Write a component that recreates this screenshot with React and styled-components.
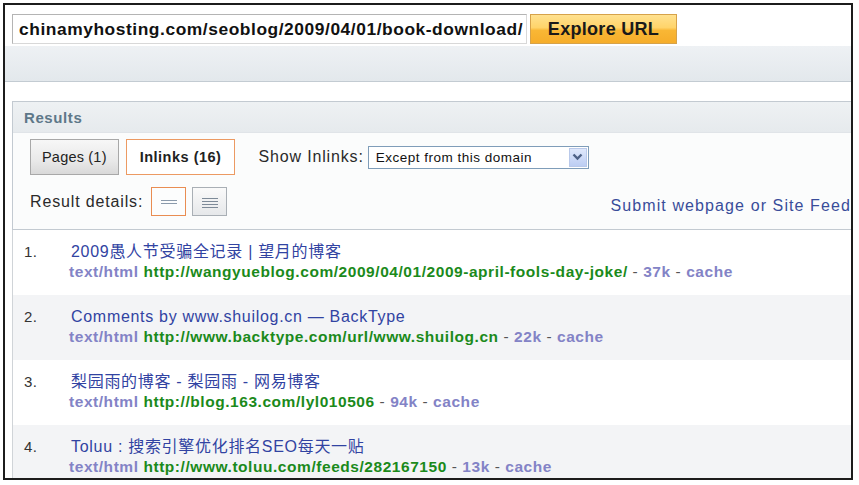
import React from "react";
import styled, { createGlobalStyle } from "styled-components";

const Global = createGlobalStyle`
  html, body { margin: 0; padding: 0; background: #fff; }
  body { font-family: "Liberation Sans", Arial, "Noto Sans CJK SC", sans-serif; }
  * { box-sizing: border-box; }
`;

const Frame = styled.div`
  margin: 3px 6px 0 3px;
  height: 477px;
  border: 2px solid #1c1c1c;
  background: #fff;
  overflow: hidden;
  display: flex;
  flex-direction: column;
  & > * { flex-shrink: 0; }
`;

const TopBar = styled.div`
  display: flex;
  align-items: stretch;
  gap: 3px;
  padding: 9px 7px 0 7px;
  height: 39px;
`;

const UrlInput = styled.div`
  width: 515px;
  border: 1px solid #b4b4b4;
  border-right-color: #d8d8d8;
  border-bottom-color: #d8d8d8;
  background: #fff;
  font-weight: bold;
  font-size: 17.4px;
  letter-spacing: 0.55px;
  color: #111;
  display: flex;
  align-items: center;
  padding-left: 6px;
  white-space: nowrap;
  overflow: hidden;
`;

const ExploreButton = styled.div`
  width: 147px;
  border: 1px solid #d6a24a;
  background: linear-gradient(#ffe18f 0%, #ffd46a 45%, #f9b735 55%, #f6ad2a 100%);
  font-weight: bold;
  font-size: 18px;
  color: #1a1a1a;
  display: flex;
  align-items: center;
  justify-content: center;
  letter-spacing: 0.3px;
`;

const Band = styled.div`
  margin-top: 2px;
  height: 36px;
  background: linear-gradient(#eef1f4, #e3e8ec);
  border-bottom: 1px solid #c3cbd2;
`;

const Gap = styled.div`
  height: 19px;
`;

const Panel = styled.div`
  margin-left: 7px;
  border: 1px solid #c3cad1;
  border-right: none;
  background: #fbfcfc;
`;

const PanelHeader = styled.div`
  height: 31px;
  background: linear-gradient(#eef1f3, #e6eaed);
  border-bottom: 1px solid #e0e4e8;
  display: flex;
  align-items: center;
  padding-left: 11px;
  font-weight: bold;
  font-size: 15px;
  letter-spacing: 0.6px;
  color: #5e7889;
`;

const PanelBody = styled.div`
  padding: 6px 0 13px 17px;
  display: flex;
  flex-direction: column;
  gap: 12px;
`;

const Row = styled.div`
  display: flex;
  align-items: center;
`;

const Tab = styled.div`
  height: 36px;
  padding: 0 ${(p) => (p.$active ? "13px" : "11px")};
  margin-right: 7px;
  display: flex;
  align-items: center;
  font-size: 14.5px;
  font-weight: ${(p) => (p.$active ? "bold" : "normal")};
  color: #222;
  border: 1px solid ${(p) => (p.$active ? "#ec9a62" : "#a8a8a8")};
  background: ${(p) =>
    p.$active ? "#fff" : "linear-gradient(#f7f7f7, #e9e9e9 60%, #d9d9d9)"};
  letter-spacing: ${(p) => (p.$active ? "0.5px" : "0.2px")};
`;

const Label = styled.span`
  font-size: 16px;
  color: #2a2a2a;
  letter-spacing: 0.85px;
  margin-left: ${(p) => p.$ml || 0}px;
  margin-right: ${(p) => p.$mr || 0}px;
`;

const Select = styled.div`
  width: 221px;
  height: 23px;
  border: 1px solid #7f9db9;
  background: #fff;
  display: flex;
  align-items: center;
  justify-content: space-between;
  padding: 0 1px 0 7px;
  font-size: 13.5px;
  color: #111;
  letter-spacing: 0.5px;
`;

const SelectArrow = styled.div`
  width: 18px;
  height: 19px;
  background: linear-gradient(#dfe8fb, #bccdf3);
  border: 1px solid #b9c9ea;
  display: flex;
  align-items: center;
  justify-content: center;
`;

const DetailRow = styled.div`
  display: flex;
  align-items: center;
  height: 29px;
`;

const IconButton = styled.div`
  width: 35px;
  height: 29px;
  margin-right: 6px;
  border: 1px solid ${(p) => (p.$active ? "#e98d52" : "#a9afb5")};
  background: ${(p) => (p.$active ? "#fcfdfd" : "linear-gradient(#fafafa, #e6e8ea)")};
  display: flex;
  align-items: center;
  justify-content: center;
`;

const SubmitLink = styled.a`
  margin-left: auto;
  margin-right: 0;
  margin-top: 8px;
  font-size: 16px;
  color: #394d9a;
  letter-spacing: 1.1px;
  text-decoration: none;
  white-space: nowrap;
`;

const List = styled.div`
  margin-left: 7px;
  border-left: 1px solid #d0d4d8;
`;

const Item = styled.div`
  height: 65px;
  padding: 11px 0 0 11px;
  background: ${(p) => (p.$alt ? "#f3f4f6" : "#fff")};
  display: grid;
  grid-template-columns: 47px 1fr;
  grid-template-rows: 21px 20px;
  align-items: start;
`;

const Num = styled.span`
  font-size: 15px;
  line-height: 21px;
  color: #333;
  letter-spacing: 0.5px;
`;

const Title = styled.a`
  font-size: 16px;
  line-height: 21px;
  color: #3143a2;
  text-decoration: none;
  letter-spacing: 0.7px;
  white-space: nowrap;
`;

const Meta = styled.div`
  grid-column: 2;
  margin-left: -2px;
  font-size: 15.5px;
  line-height: 20px;
  font-weight: bold;
  white-space: nowrap;
  color: #555;
  letter-spacing: 0.55px;
`;

const Lav = styled.span`
  color: #8383c6;
`;

const Green = styled.span`
  color: #1b8a1b;
`;

const Dash = styled.span`
  color: #555;
  font-weight: normal;
`;

const items = [
  {
    title: "2009愚人节受骗全记录 | 望月的博客",
    url: "http://wangyueblog.com/2009/04/01/2009-april-fools-day-joke/",
    size: "37k",
  },
  {
    title: "Comments by www.shuilog.cn — BackType",
    url: "http://www.backtype.com/url/www.shuilog.cn",
    size: "22k",
  },
  {
    title: "梨园雨的博客 - 梨园雨 - 网易博客",
    url: "http://blog.163.com/lyl010506",
    size: "94k",
  },
  {
    title: "Toluu : 搜索引擎优化排名SEO每天一贴",
    url: "http://www.toluu.com/feeds/282167150",
    size: "13k",
  },
];

const Chevron = () => (
  <svg width="11" height="8" viewBox="0 0 11 8">
    <path d="M1.5 1.5 L5.5 5.5 L9.5 1.5" fill="none" stroke="#4d6185" strokeWidth="2.4" />
  </svg>
);

const Lines = ({ count }) => (
  <svg width="18" height="12" viewBox="0 0 18 12">
    {count === 2 ? (
      <>
        <rect x="1" y="4" width="16" height="1" fill="#8a9aab" />
        <rect x="1" y="7" width="16" height="1" fill="#8a9aab" />
      </>
    ) : (
      <>
        <rect x="1" y="2" width="16" height="1" fill="#7d8a98" />
        <rect x="1" y="5" width="16" height="1" fill="#7d8a98" />
        <rect x="1" y="8" width="16" height="1" fill="#7d8a98" />
        <rect x="1" y="11" width="16" height="1" fill="#7d8a98" />
      </>
    )}
  </svg>
);

export default function App() {
  return (
    <>
      <Global />
      <Frame>
        <TopBar>
          <UrlInput>chinamyhosting.com/seoblog/2009/04/01/book-download/</UrlInput>
          <ExploreButton>Explore URL</ExploreButton>
        </TopBar>
        <Band />
        <Gap />
        <Panel>
          <PanelHeader>Results</PanelHeader>
          <PanelBody>
            <Row>
              <Tab>Pages (1)</Tab>
              <Tab $active>Inlinks (16)</Tab>
              <Label $ml={16} $mr={4}>Show Inlinks:</Label>
              <Select>
                <span>Except from this domain</span>
                <SelectArrow>
                  <Chevron />
                </SelectArrow>
              </Select>
            </Row>
            <DetailRow>
              <Label $mr={8}>Result details:</Label>
              <IconButton $active>
                <Lines count={2} />
              </IconButton>
              <IconButton>
                <Lines count={4} />
              </IconButton>
              <SubmitLink>Submit webpage or Site Feed</SubmitLink>
            </DetailRow>
          </PanelBody>
        </Panel>
        <List>
          {items.map((it, i) => (
            <Item key={i} $alt={i % 2 === 1}>
              <Num>{i + 1}.</Num>
              <Title>{it.title}</Title>
              <Meta>
                <Lav>text/html</Lav> <Green>{it.url}</Green>
                <Dash> - </Dash>
                <Lav>{it.size}</Lav>
                <Dash> - </Dash>
                <Lav>cache</Lav>
              </Meta>
            </Item>
          ))}
        </List>
      </Frame>
    </>
  );
}
